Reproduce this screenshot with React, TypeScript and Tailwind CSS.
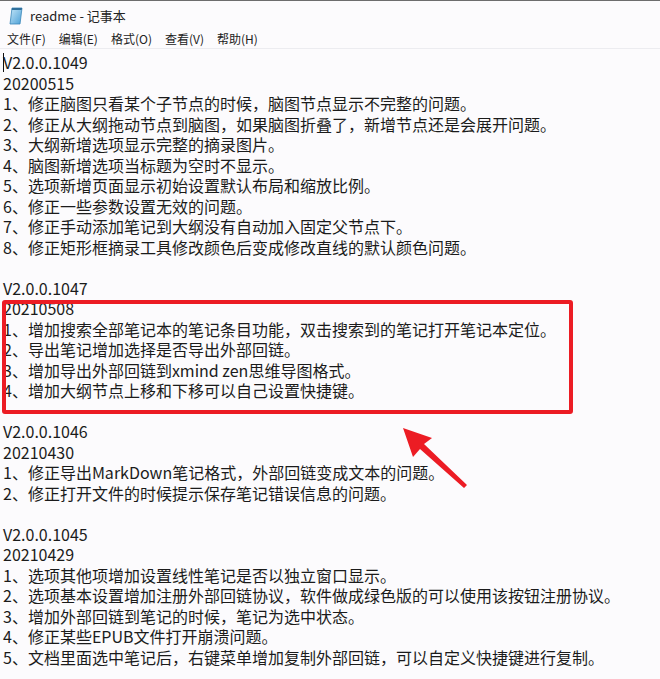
const lines = [
  'V2.0.0.1049',
  '20200515',
  '1、修正脑图只看某个子节点的时候，脑图节点显示不完整的问题。',
  '2、修正从大纲拖动节点到脑图，如果脑图折叠了，新增节点还是会展开问题。',
  '3、大纲新增选项显示完整的摘录图片。',
  '4、脑图新增选项当标题为空时不显示。',
  '5、选项新增页面显示初始设置默认布局和缩放比例。',
  '6、修正一些参数设置无效的问题。',
  '7、修正手动添加笔记到大纲没有自动加入固定父节点下。',
  '8、修正矩形框摘录工具修改颜色后变成修改直线的默认颜色问题。',
  '',
  'V2.0.0.1047',
  '20210508',
  '1、增加搜索全部笔记本的笔记条目功能，双击搜索到的笔记打开笔记本定位。',
  '2、导出笔记增加选择是否导出外部回链。',
  '3、增加导出外部回链到xmind zen思维导图格式。',
  '4、增加大纲节点上移和下移可以自己设置快捷键。',
  '',
  'V2.0.0.1046',
  '20210430',
  '1、修正导出MarkDown笔记格式，外部回链变成文本的问题。',
  '2、修正打开文件的时候提示保存笔记错误信息的问题。',
  '',
  'V2.0.0.1045',
  '20210429',
  '1、选项其他项增加设置线性笔记是否以独立窗口显示。',
  '2、选项基本设置增加注册外部回链协议，软件做成绿色版的可以使用该按钮注册协议。',
  '3、增加外部回链到笔记的时候，笔记为选中状态。',
  '4、修正某些EPUB文件打开崩溃问题。',
  '5、文档里面选中笔记后，右键菜单增加复制外部回链，可以自定义快捷键进行复制。',
];

const menus = ['文件(F)', '编辑(E)', '格式(O)', '查看(V)', '帮助(H)'];

function NotepadIcon() {
  return (
    <svg width="16" height="18" viewBox="0 0 16 18">
      <defs>
        <linearGradient id="pad" x1="0" y1="0" x2="1" y2="1">
          <stop offset="0" stopColor="#c6e7f8" />
          <stop offset="1" stopColor="#4a9fd6" />
        </linearGradient>
      </defs>
      <path d="M4 1 H14 L12 17 H2 Z" fill="url(#pad)" stroke="#3a86b9" strokeWidth="0.8" />
      <path d="M4 1 H14 L13.7 3 H3.7 Z" fill="#2f6f9c" />
    </svg>
  );
}

export default function App() {
  return (
    <div
      className="relative w-[660px] h-[679px] overflow-hidden bg-[#fcfbfd] border-t border-[#6d6d6d] text-[#1b1b1b]"
      style={{ fontFamily: '"Noto Sans CJK SC", "Noto Sans", sans-serif' }}
    >
      {/* Title bar */}
      <div className="flex items-center gap-[6px] h-[29px] pl-[8px]">
        <NotepadIcon />
        <span className="text-[13px] text-[#222]">readme - 记事本</span>
      </div>

      {/* Menu */}
      <div className="flex items-center h-[19px] pl-[7px] pb-[1px] border-b border-[#ececf0]">
        {menus.map((m) => (
          <span key={m} className="text-[12px] leading-[16px] mr-[13px] text-[#222]">{m}</span>
        ))}
      </div>

      {/* Text body */}
      <div className="relative px-[3px] pt-[3px] text-[16px] leading-[20.5px] whitespace-pre">
        <span className="absolute left-[3px] top-[4px] w-px h-[19px] bg-[#111]" />
        {lines.map((l, i) => (
          <div key={i} className="h-[20.5px]">{l}</div>
        ))}
      </div>

      {/* Annotation box */}
      <div className="absolute left-[2px] top-[299px] w-[571px] h-[114px] border-[4px] border-[#ec1c24] rounded-[3px]" />

      {/* Arrow */}
      <svg className="absolute left-[395px] top-[420px]" width="80" height="70" viewBox="0 0 80 70">
        <path d="M8 7 L37 17 L29 23 L72 64 L69 67 L25 28 L18 36 Z" fill="#ec1c24" />
      </svg>
    </div>
  );
}
